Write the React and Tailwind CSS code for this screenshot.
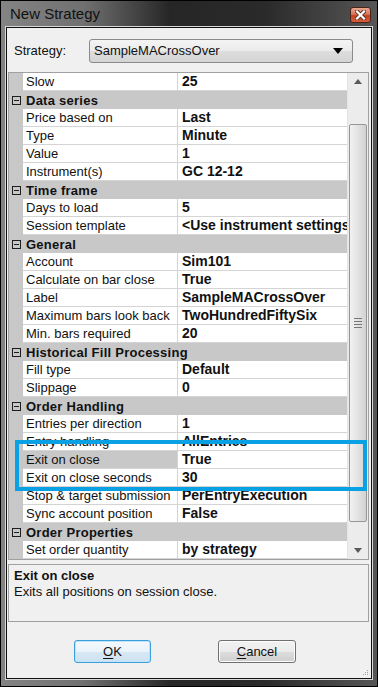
import React from "react";

const rows = [
  { name: "Slow", value: "25" },
  { cat: "Data series" },
  { name: "Price based on", value: "Last" },
  { name: "Type", value: "Minute" },
  { name: "Value", value: "1" },
  { name: "Instrument(s)", value: "GC 12-12" },
  { cat: "Time frame" },
  { name: "Days to load", value: "5" },
  { name: "Session template", value: "<Use instrument settings>" },
  { cat: "General" },
  { name: "Account", value: "Sim101" },
  { name: "Calculate on bar close", value: "True" },
  { name: "Label", value: "SampleMACrossOver" },
  { name: "Maximum bars look back", value: "TwoHundredFiftySix" },
  { name: "Min. bars required", value: "20" },
  { cat: "Historical Fill Processing" },
  { name: "Fill type", value: "Default" },
  { name: "Slippage", value: "0" },
  { cat: "Order Handling" },
  { name: "Entries per direction", value: "1" },
  { name: "Entry handling", value: "AllEntries" },
  { name: "Exit on close", value: "True", selected: true },
  { name: "Exit on close seconds", value: "30" },
  { name: "Stop & target submission", value: "PerEntryExecution" },
  { name: "Sync account position", value: "False" },
  { cat: "Order Properties" },
  { name: "Set order quantity", value: "by strategy" },
];

function CloseButton() {
  return (
    <div className="w-[21px] h-[16px] rounded-[3px] border border-[#4a2418] bg-[linear-gradient(180deg,#eaa690_0%,#d8755a_45%,#c2401f_55%,#d6603c_100%)] flex items-center justify-center">
      <svg width="11" height="10" viewBox="0 0 11 10">
        <path d="M2 1.5 L9 8.5 M9 1.5 L2 8.5" stroke="#5a3024" strokeWidth="4" strokeLinecap="square" />
        <path d="M2 1.5 L9 8.5 M9 1.5 L2 8.5" stroke="#ffffff" strokeWidth="2.2" strokeLinecap="square" />
      </svg>
    </div>
  );
}

function MinusBox() {
  return (
    <div className="w-[9px] h-[9px] border border-[#1e1e1e] flex items-center justify-center">
      <div className="w-[5px] h-[1px] bg-[#1e1e1e]" />
    </div>
  );
}

function GridRow({ row }) {
  if (row.cat) {
    return (
      <div className="h-[18px] flex items-center bg-[#c8c8c8]">
        <div className="w-[14px] flex justify-center pl-[1px]">
          <MinusBox />
        </div>
        <div className="pl-[3px] font-bold text-[13px] tracking-[0.25px] leading-[17px] text-[#111] whitespace-nowrap">
          {row.cat}
        </div>
      </div>
    );
  }
  return (
    <div className="h-[18px] flex bg-[#c8c8c8]">
      <div className="w-[14px]" />
      <div className="flex-1 flex border-b border-[#d4d4d4] min-w-0">
        <div
          className={`w-[155px] pl-[3px] border-r border-[#d4d4d4] text-[13px] leading-[17px] text-[#111] whitespace-nowrap overflow-hidden ${
            row.selected ? "bg-[#c8c8c8]" : "bg-white"
          }`}
        >
          {row.name}
        </div>
        <div className="flex-1 bg-white pl-[4px] font-bold text-[14px] leading-[17px] text-[#111] whitespace-nowrap overflow-hidden">
          {row.value}
        </div>
      </div>
    </div>
  );
}

function Scrollbar() {
  return (
    <div className="w-[21px] flex flex-col bg-[#ececec] border-l border-[#e4e4e4]">
      <div className="h-[17px] flex items-center justify-center">
        <svg width="8" height="5" viewBox="0 0 8 5">
          <path d="M4 0 L8 5 L0 5 Z" fill="#5a5a5a" />
        </svg>
      </div>
      <div className="h-[34px]" />
      <div className="h-[398px] mx-[1px] rounded-[2px] border border-[#979797] bg-[linear-gradient(90deg,#f2f2f2_0%,#e4e4e4_45%,#d2d2d2_100%)] flex items-center justify-center">
        <div className="flex flex-col gap-[2px]">
          <div className="w-[8px] h-[1px] bg-[#777]" />
          <div className="w-[8px] h-[1px] bg-[#777]" />
          <div className="w-[8px] h-[1px] bg-[#777]" />
          <div className="w-[8px] h-[1px] bg-[#777]" />
        </div>
      </div>
      <div className="h-[20px]" />
      <div className="h-[17px] flex items-center justify-center">
        <svg width="8" height="5" viewBox="0 0 8 5">
          <path d="M0 0 L8 0 L4 5 Z" fill="#5a5a5a" />
        </svg>
      </div>
    </div>
  );
}

export default function App() {
  return (
    <div className="relative w-[378px] h-[687px] border border-black bg-[linear-gradient(90deg,#848484_0%,#707070_22%,#262626_45%,#2a2a2a_70%,#565656_100%)] flex flex-col font-['Liberation_Sans',Arial,sans-serif] overflow-hidden">
      {/* title bar */}
      <div className="h-[26px] flex items-start justify-between pl-[9px] pr-[6px]">
        <div className="text-[15px] leading-[26px] text-[#111]">New Strategy</div>
        <div className="pt-[6px]">
          <CloseButton />
        </div>
      </div>

      {/* client area */}
      <div className="flex-1 mx-[5px] mb-[7px] border border-[#111] outline outline-1 outline-[#d8d8d8] bg-[#f0f0f0] flex flex-col">
        <div className="mt-[11px] flex items-center pl-[7px]">
          <div className="w-[75px] text-[13px] text-[#111]">Strategy:</div>
          <div className="w-[264px] h-[24px] rounded-[3px] border border-[#8a8a8a] bg-[linear-gradient(180deg,#f4f4f4_0%,#ebebeb_50%,#dddddd_51%,#d4d4d4_100%)] flex items-center justify-between pl-[4px] pr-[9px]">
            <span className="text-[13px] text-[#111]">SampleMACrossOver</span>
            <svg width="10" height="6" viewBox="0 0 10 6">
              <path d="M0 0 L10 0 L5 6 Z" fill="#000" />
            </svg>
          </div>
        </div>

        {/* property grid */}
        <div className="mt-[9px] ml-[1px] w-[361px] border border-[#a0a0a0] flex bg-white">
          <div className="flex-1 flex flex-col min-w-0">
            {rows.map((row, i) => (
              <GridRow key={i} row={row} />
            ))}
          </div>
          <Scrollbar />
        </div>

        {/* description */}
        <div className="mt-[4px] ml-[1px] w-[361px] h-[58px] border border-[#a0a0a0] px-[5px] pt-[3px]">
          <div className="font-bold text-[13px] leading-[16px] text-[#111]">Exit on close</div>
          <div className="text-[13px] leading-[16px] text-[#111]">Exits all positions on session close.</div>
        </div>

        {/* buttons */}
        <div className="mt-[18px] flex pl-[67px] gap-[67px]">
          <button className="w-[77px] h-[23px] rounded-[3px] border border-[#3c9fdc] bg-[linear-gradient(180deg,#f4f9fd_0%,#eaf3fa_50%,#d8e8f4_51%,#cfe2f0_100%)] shadow-[inset_0_0_0_1px_#bfe3f8] text-[13px] text-[#111]">
            <span className="underline underline-offset-2">O</span>K
          </button>
          <button className="w-[78px] h-[23px] rounded-[3px] border border-[#707070] bg-[linear-gradient(180deg,#f2f2f2_0%,#ebebeb_50%,#dddddd_51%,#cfcfcf_100%)] shadow-[inset_0_0_0_1px_#fcfcfc] text-[13px] text-[#111]">
            <span className="underline underline-offset-2">C</span>ancel
          </button>
        </div>
        <div className="flex-1" />
        <div className="flex justify-end pr-[2px] pb-[2px]">
          <svg width="6" height="6" viewBox="0 0 6 6">
            <rect x="4" y="0" width="1" height="1" fill="#a0a0a0" />
            <rect x="2" y="2" width="1" height="1" fill="#a0a0a0" />
            <rect x="4" y="2" width="1" height="1" fill="#a0a0a0" />
            <rect x="0" y="4" width="1" height="1" fill="#a0a0a0" />
            <rect x="2" y="4" width="1" height="1" fill="#a0a0a0" />
            <rect x="4" y="4" width="1" height="1" fill="#a0a0a0" />
          </svg>
        </div>
      </div>

      {/* highlight annotation */}
      <div className="absolute left-[14px] top-[439px] w-[352px] h-[51px] border-[4px] border-[#0aa0e4] pointer-events-none" />
    </div>
  );
}
